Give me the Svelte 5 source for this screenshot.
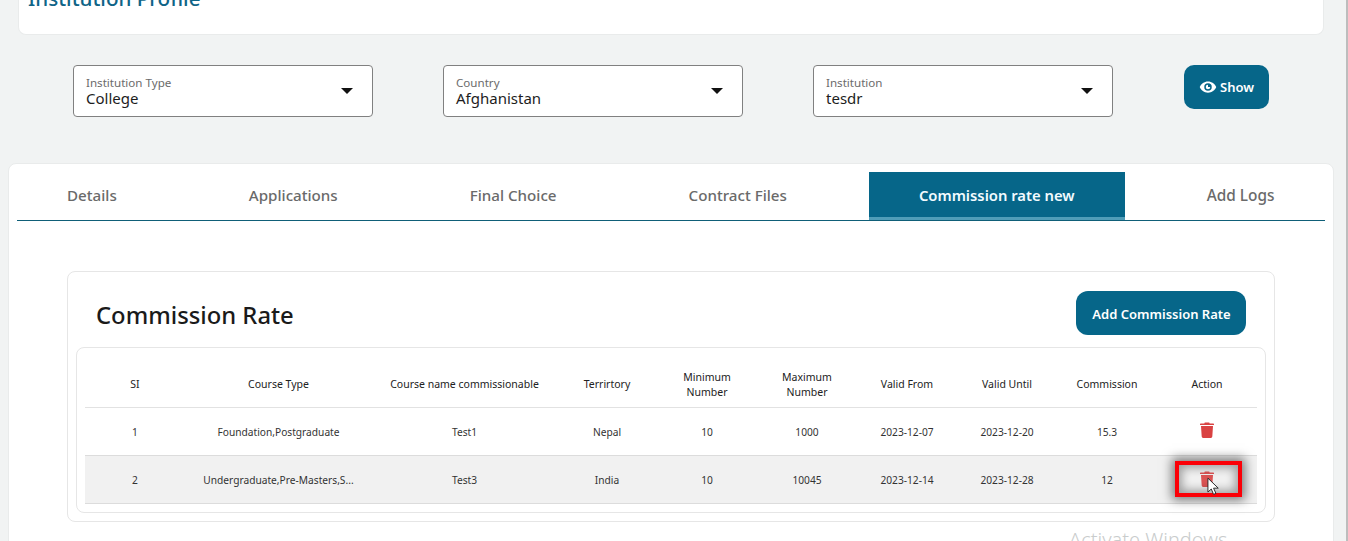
<script lang="ts">
  const filters = [
    { label: "Institution Type", value: "College" },
    { label: "Country", value: "Afghanistan" },
    { label: "Institution", value: "tesdr" }
  ];

  const tabs = ["Details", "Applications", "Final Choice", "Contract Files", "Commission rate new", "Add Logs"];
  const activeTab = "Commission rate new";

  const columns = [
    { label: "SI", width: 100 },
    { label: "Course Type", width: 187 },
    { label: "Course name commissionable", width: 185 },
    { label: "Terrirtory", width: 100 },
    { label: "Minimum Number", width: 100 },
    { label: "Maximum Number", width: 100 },
    { label: "Valid From", width: 100 },
    { label: "Valid Until", width: 100 },
    { label: "Commission", width: 100 },
    { label: "Action", width: 100 }
  ];

  const rows = [
    {
      si: 1,
      courseType: "Foundation,Postgraduate",
      courseName: "Test1",
      territory: "Nepal",
      min: 10,
      max: 1000,
      from: "2023-12-07",
      until: "2023-12-20",
      commission: "15.3"
    },
    {
      si: 2,
      courseType: "Undergraduate,Pre-Masters,S...",
      courseName: "Test3",
      territory: "India",
      min: 10,
      max: 10045,
      from: "2023-12-14",
      until: "2023-12-28",
      commission: "12",
      marked: true
    }
  ];
</script>

<div class="page">
  <section class="profile-card">
    <h1>Institution Profile</h1>
  </section>

  <div class="filters">
    {#each filters as filter}
      <div class="select">
        <div class="select-text">
          <span class="select-label">{filter.label}</span>
          <span class="select-value">{filter.value}</span>
        </div>
        <span class="caret"></span>
      </div>
    {/each}
    <button class="btn show-btn">
      <svg width="18" height="18" viewBox="0 0 24 24" aria-hidden="true">
        <path
          fill="currentColor"
          fill-rule="evenodd"
          d="M12 4.5C7 4.5 2.7 7.6 1 12c1.7 4.4 6 7.500 11 7.500s9.300-3.100 11-7.500c-1.700-4.400-6-7.500-11-7.500zm0 12.500a5 5 0 1 1 0-10 5 5 0 0 1 0 10zm0-8a3 3 0 1 0 3 3h-3z"
        />
      </svg>
      Show
    </button>
  </div>

  <section class="main-card">
    <nav class="tabs">
      {#each tabs as tab}
        <div class="tab" class:active={tab === activeTab}>{tab}</div>
      {/each}
    </nav>

    <div class="rate-card">
      <header class="rate-header">
        <h2>Commission Rate</h2>
        <button class="btn add-btn">Add Commission Rate</button>
      </header>

      <div class="table-wrap">
        <table>
          <colgroup>
            {#each columns as col}
              <col style="width: {col.width}px" />
            {/each}
          </colgroup>
          <thead>
            <tr>
              {#each columns as col}
                <th><span class="th-text">{col.label}</span></th>
              {/each}
            </tr>
          </thead>
          <tbody>
            {#each rows as row}
              <tr class:alt={row.marked}>
                <td>{row.si}</td>
                <td>{row.courseType}</td>
                <td>{row.courseName}</td>
                <td>{row.territory}</td>
                <td>{row.min}</td>
                <td>{row.max}</td>
                <td>{row.from}</td>
                <td>{row.until}</td>
                <td>{row.commission}</td>
                <td class="action-cell">
                  <svg class="trash" width="14" height="16" viewBox="0 0 14 16" aria-hidden="true">
                    <path
                      fill="currentColor"
                      d="M4.800 0.500h4.400l.5 1H13.300a.7.7 0 0 1 .7.700v.8H0v-.8a.7.7 0 0 1 .7-.7h3.600zM1 4h12l-.7 10.600a1.400 1.400 0 0 1-1.400 1.300H3.100a1.400 1.400 0 0 1-1.400-1.300z"
                    />
                  </svg>
                  {#if row.marked}
                    <span class="highlight"></span>
                    <svg class="cursor" width="13" height="19" viewBox="0 0 14 20" aria-hidden="true">
                      <path
                        fill="#fff"
                        stroke="#222"
                        stroke-width="1"
                        d="M1 1v15l3.600-3.300 2.500 5.800 2.500-1.100-2.500-5.600h5z"
                      />
                    </svg>
                  {/if}
                </td>
              </tr>
            {/each}
          </tbody>
        </table>
      </div>
    </div>
  </section>

  <div class="scrollbar"></div>
  <div class="watermark">Activate Windows</div>
</div>

<style>
  :global(body) {
    margin: 0;
    overflow: hidden;
    background: #f1f3f3;
  }

  .page {
    position: relative;
    height: 541px;
    overflow: hidden;
    font-family: "Noto Sans", "Open Sans", sans-serif;
    color: #1d1d1d;
  }

  .profile-card {
    box-sizing: border-box;
    width: 1306px;
    height: 35px;
    margin-left: 18px;
    padding-left: 9px;
    background: #fff;
    border: 1px solid #e9ebeb;
    border-top: 0;
    border-radius: 0 0 8px 8px;
    overflow: hidden;
  }

  h1 {
    margin: -12px 0 0;
    font-size: 20.600px;
    line-height: 20px;
    font-weight: 500;
    color: #0f6487;
  }

  .filters {
    display: flex;
    align-items: flex-start;
    gap: 70px;
    padding: 30px 0 0 73px;
  }

  .select {
    box-sizing: border-box;
    width: 300px;
    height: 52px;
    padding: 1px 19px 0 12px;
    display: flex;
    align-items: center;
    justify-content: space-between;
    background: #fff;
    border: 1px solid #808080;
    border-radius: 4px;
  }

  .select-text {
    display: flex;
    flex-direction: column;
  }

  .select-label {
    font-size: 11.600px;
    line-height: 14px;
    color: #6b6b6b;
  }

  .select-value {
    font-size: 15px;
    line-height: 17px;
    color: #1d1d1d;
  }

  .caret {
    width: 0;
    height: 0;
    margin-top: -1px;
    border-left: 6px solid transparent;
    border-right: 6px solid transparent;
    border-top: 6px solid #111;
  }

  .btn {
    border: 0;
    background: #066689;
    color: #fff;
    font-family: inherit;
    font-weight: 600;
    font-size: 13px;
    padding: 0;
    display: flex;
    align-items: center;
    justify-content: center;
  }

  .show-btn {
    width: 85px;
    height: 44px;
    gap: 3px;
    margin-left: 1px;
    border-radius: 10px;
  }

  .main-card {
    box-sizing: border-box;
    width: 1326px;
    height: 420px;
    margin: 46px 0 0 8px;
    padding: 8px;
    background: #fff;
    border: 1px solid #e9ebeb;
    border-radius: 8px;
  }

  .tabs {
    display: flex;
    gap: 32px;
    border-bottom: 1px solid #0f5f78;
  }

  .tab {
    box-sizing: border-box;
    height: 48px;
    line-height: 47px;
    padding: 0 50px;
    font-size: 15.150px;
    font-weight: 500;
    color: #6a6a6a;
  }

  .tab:last-child {
    font-size: 15.400px;
  }

  .tab.active {
    background: #066689;
    color: #f2fbff;
    font-size: 14.800px;
    font-weight: 600;
    border-bottom: 3px solid #4f9db8;
  }

  .rate-card {
    box-sizing: border-box;
    height: 251px;
    margin: 50px 50px 0 50px;
    padding: 19px 8px 8px;
    border: 1px solid #e6e6e6;
    border-radius: 8px;
  }

  .rate-header {
    display: flex;
    align-items: center;
    justify-content: space-between;
    height: 44px;
    padding: 0 20px 0 20px;
    margin-bottom: 12px;
  }

  h2 {
    margin: 4px 0 0;
    font-size: 23.800px;
    font-weight: 500;
    color: #1a1a1a;
  }

  .add-btn {
    width: 170px;
    height: 44px;
    padding: 2px 0 0 1px;
    border-radius: 12px;
  }

  .table-wrap {
    box-sizing: border-box;
    height: 166px;
    padding: 8px;
    border: 1px solid #e6e6e6;
    border-radius: 8px;
  }

  table {
    width: 1172px;
    table-layout: fixed;
    border-collapse: collapse;
    font-size: 10.200px;
    color: #333;
  }

  th {
    box-sizing: border-box;
    height: 51px;
    padding: 7px 18px 0;
    font-size: 10.500px;
    font-weight: 400;
    line-height: 15px;
    text-align: center;
    color: #222;
    border-bottom: 1px solid #e2e2e2;
    white-space: normal;
  }

  th .th-text {
    display: block;
  }

  th:nth-child(3) {
    padding: 7px 0 0;
    white-space: nowrap;
  }

  td {
    box-sizing: border-box;
    height: 48px;
    padding: 2px 0 0;
    text-align: center;
    white-space: nowrap;
    border-bottom: 1px solid #dcdcdc;
  }

  tr.alt td {
    background: #f1f1f1;
  }

  .action-cell {
    position: relative;
    color: #d94242;
  }

  .trash {
    display: block;
    margin: -4px auto 0;
  }

  tr.alt .trash {
    margin-top: -3px;
    opacity: 0.9;
  }

  .highlight {
    position: absolute;
    left: 18px;
    top: 5px;
    box-sizing: border-box;
    width: 67px;
    height: 36px;
    border: 4px solid #fb0007;
    box-shadow:
      0 0 10px 3px rgba(0, 0, 0, 0.5),
      inset 0 0 10px 3px rgba(0, 0, 0, 0.35);
  }

  .cursor {
    position: absolute;
    left: 50px;
    top: 21px;
  }

  .scrollbar {
    position: absolute;
    top: 0;
    right: 0;
    width: 2px;
    height: 100%;
    background: #bdbdbd;
  }

  .watermark {
    position: absolute;
    left: 1069px;
    top: 528px;
    font-size: 20px;
    line-height: 24px;
    font-weight: 300;
    color: #c9cccc;
    white-space: nowrap;
  }
</style>
